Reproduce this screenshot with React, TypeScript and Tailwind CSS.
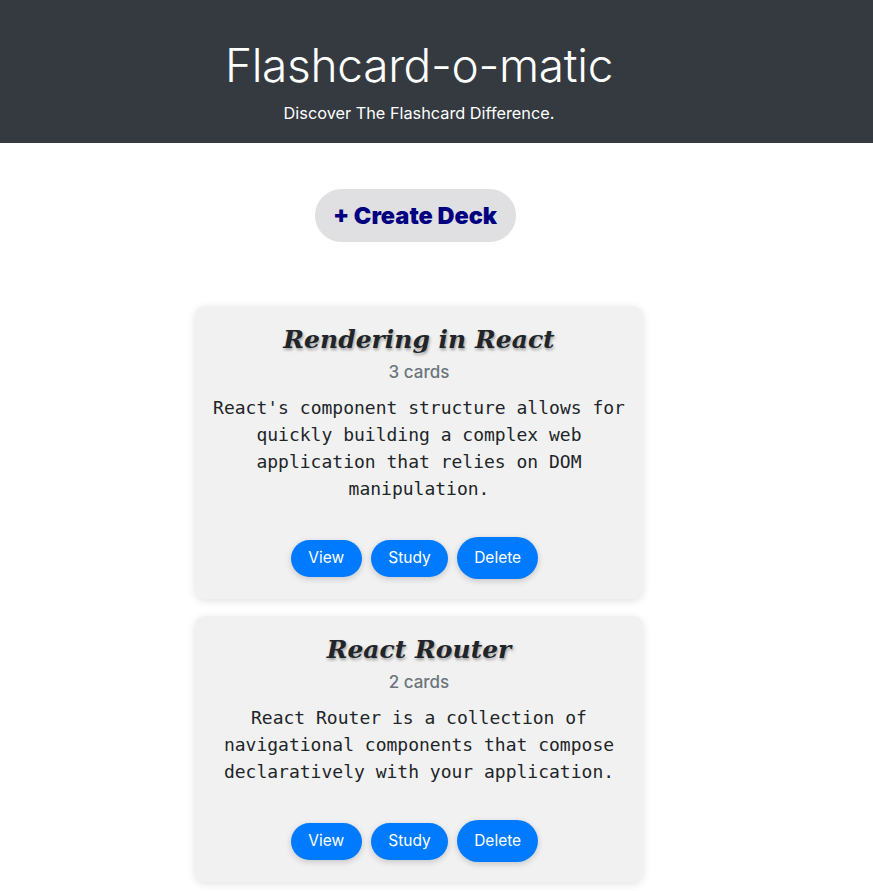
import React from "react";

const decks = [
  {
    name: "Rendering in React",
    count: 3,
    description:
      "React's component structure allows for quickly building a complex web application that relies on DOM manipulation.",
  },
  {
    name: "React Router",
    count: 2,
    description:
      "React Router is a collection of navigational components that compose declaratively with your application.",
  },
];

function Btn({ label, tall }: { label: string; tall?: boolean }) {
  return (
    <button
      className={
        "mr-[9px] rounded-full bg-[#007bff] text-[15.5px] text-white shadow-[0_2px_6px_rgba(0,0,0,0.18)] " +
        (tall ? "h-[42px] px-[17px]" : "h-[37px] px-[17.5px]")
      }
      style={{ fontFamily: "Inter, sans-serif" }}
    >
      {label}
    </button>
  );
}

export default function App() {
  return (
    <div className="min-h-[891px] bg-white" style={{ fontFamily: "Inter, sans-serif" }}>
      <header className="h-[143px] bg-[#343a40] w-full">
        <div className="w-[838px] flex flex-col items-center pt-[35px]">
          <h1 className="text-[46px] leading-[60px] font-light text-white tracking-[-0.3px]">
            Flashcard-o-matic
          </h1>
          <p className="mt-[6px] text-[16.3px] leading-[24px] text-white">
            Discover The Flashcard Difference.
          </p>
        </div>
      </header>
      <main className="w-[838px] flex flex-col items-center">
        <button className="mt-[46px] h-[53px] w-[201px] rounded-full bg-[#e0e0e3] text-[23.5px] font-black text-[#000080] -translate-x-[4px]">
          + Create Deck
        </button>
        <div className="mt-[64px] flex flex-col gap-[17px]">
          {decks.map((d) => (
            <div
              key={d.name}
              className="w-[448px] rounded-[10px] bg-[#f1f1f1] px-4 pt-[18px] pb-[20px] flex flex-col items-center text-center shadow-[0_2px_8px_rgba(0,0,0,0.12)]"
            >
              <h2
                className="text-[25px] leading-[32px] font-bold italic text-[#212529] [text-shadow:1px_2px_3px_rgba(0,0,0,0.35)]"
                style={{ fontFamily: "'DejaVu Serif', 'Liberation Serif', serif" }}
              >
                {d.name}
              </h2>
              <p className="mt-[4px] text-[17px] leading-[24px] text-[#6c757d] font-medium">
                {d.count} cards
              </p>
              <p
                className="mt-[10px] text-[18px] leading-[27px] text-[#212529]"
                style={{ fontFamily: "'DejaVu Sans Mono', monospace" }}
              >
                {d.description}
              </p>
              <div className="mt-[35px] flex items-center">
                <Btn label="View" />
                <Btn label="Study" />
                <Btn label="Delete" tall />
              </div>
            </div>
          ))}
        </div>
      </main>
    </div>
  );
}
